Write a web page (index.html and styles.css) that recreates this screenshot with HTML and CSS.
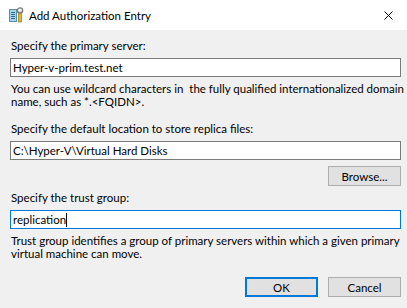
FILE: index.html
```html
<!DOCTYPE html>
<html>
<head>
<meta charset="utf-8">
<link rel="stylesheet" href="styles.css">
</head>
<body>
<div class="window">
  <div class="titlebar">
    <svg class="appicon" width="16" height="16" viewBox="0 0 16 16">
      <rect x="1" y="2" width="8" height="13" fill="#5a8fb0"/>
      <rect x="2" y="3" width="6" height="11" fill="#a9d3ea"/>
      <rect x="3" y="5" width="4" height="1" fill="#2f6a8f"/>
      <rect x="3" y="7" width="4" height="1" fill="#2f6a8f"/>
      <rect x="3" y="9" width="4" height="1" fill="#2f6a8f"/>
      <rect x="3" y="11" width="4" height="1" fill="#2f6a8f"/>
      <rect x="10.5" y="5" width="3" height="10" fill="#e2b52a" stroke="#8a6a10" stroke-width="0.6"/>
      <circle cx="12" cy="3.5" r="2.6" fill="none" stroke="#7b7b7b" stroke-width="1.4"/>
    </svg>
    <span class="title">Add Authorization Entry</span>
    <svg class="close" width="9" height="9" viewBox="0 0 9 9">
      <path d="M0.5 0.5 L8.5 8.5 M8.5 0.5 L0.5 8.5" stroke="#000" stroke-width="1"/>
    </svg>
  </div>
  <div class="content">
    <div class="label first">Specify the primary server:</div>
    <div class="field">Hyper-v-prim.test.net</div>
    <div class="help">You can use wildcard characters in&nbsp; the fully qualified internationalized domain<br>name, such as *.&lt;FQIDN&gt;.</div>
    <div class="label second">Specify the default location to store replica files:</div>
    <div class="field">C:\Hyper-V\Virtual Hard Disks</div>
    <div class="row">
      <div class="btn">Browse...</div>
    </div>
    <div class="label third">Specify the trust group:</div>
    <div class="field focused">replication<span class="caret"></span></div>
    <div class="help">Trust group identifies a group of primary servers within which a given primary<br>virtual machine can move.</div>
    <div class="row buttons">
      <div class="btn default">OK</div>
      <div class="btn">Cancel</div>
    </div>
  </div>
</div>
</body>
</html>
```
FILE: styles.css
```css
html, body {
  margin: 0;
  padding: 0;
}
body {
  width: 407px;
  height: 308px;
  overflow: hidden;
  font-family: "Lato", "Liberation Sans", sans-serif;
  font-size: 11.5px;
  color: #000;
  background: #f0f0f0;
}
.window {
  width: 407px;
  height: 308px;
  display: flex;
  flex-direction: column;
}
.titlebar {
  height: 30px;
  background: #fff;
  display: flex;
  align-items: center;
  padding-left: 8px;
  padding-right: 14px;
  box-sizing: border-box;
}
.appicon {
  flex: none;
  margin-right: 5px;
}
.title {
  flex: 1;
  font-size: 11.5px;
}
.close {
  flex: none;
}
.content {
  flex: 1;
  padding: 7px 6px 0 10px;
  display: flex;
  flex-direction: column;
}
.label {
  line-height: 15px;
  height: 15px;
  padding-left: 1px;
  white-space: nowrap;
}
.label.first { margin-top: 1px; }
.label.second { margin-top: 13px; }
.label.third { margin-top: 4px; }
.field {
  margin-top: 5px;
  height: 19px;
  box-sizing: border-box;
  border: 1px solid #7a7a7a;
  background: #fff;
  padding-left: 2px;
  line-height: 17px;
  display: flex;
  align-items: center;
}
.field.focused {
  border-color: #0078d7;
}
.caret {
  display: inline-block;
  width: 1px;
  height: 14px;
  background: #000;
}
.help {
  margin-top: 5px;
  padding-left: 1px;
  line-height: 13px;
  white-space: nowrap;
}
.row {
  display: flex;
  justify-content: flex-end;
  gap: 10px;
  margin-top: 6px;
}
.btn {
  width: 73px;
  height: 20px;
  box-sizing: border-box;
  background: #e1e1e1;
  border: 1px solid #adadad;
  display: flex;
  align-items: center;
  justify-content: center;
}
.btn.default {
  border: 2px solid #0078d7;
}
.buttons {
  margin-top: 17px;
}
```
